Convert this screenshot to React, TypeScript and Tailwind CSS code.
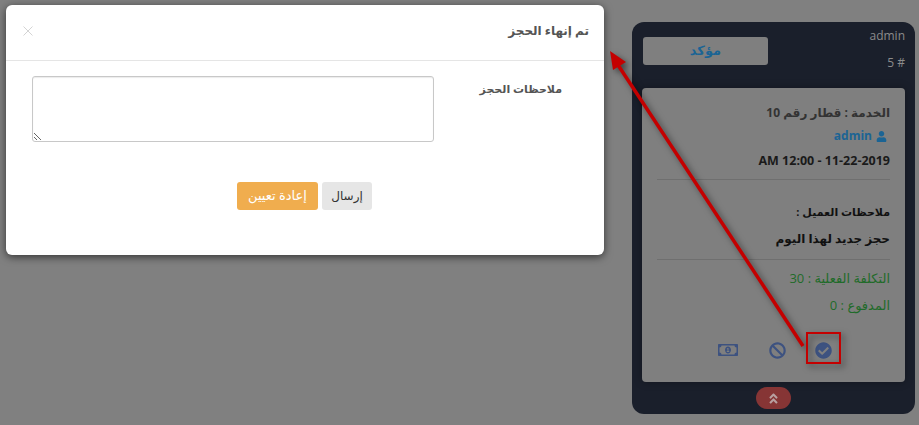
import { FaAngleDoubleUp, FaBan, FaCheckCircle, FaRegMoneyBillAlt, FaUser } from "react-icons/fa";

function BookingCard() {
  return (
    <div
      dir="rtl"
      className="flex h-[392px] w-[283px] flex-col rounded-[12px] bg-[#1a1f2b] px-[10px]"
    >
      <div className="flex h-[66px] shrink-0 justify-between">
        <div className="pt-[7px] text-[12px] leading-[14px] text-[#8b8b8b]">
          <p>admin</p>
          <p dir="ltr" className="mt-[13px] text-right">5 #</p>
        </div>
        <div className="ml-[1px] mt-[15px] flex h-[28px] w-[125px] items-center justify-center rounded-[3px] bg-[#7f7f7f] text-[13px] font-bold text-[#1b6494]">
          مؤكد
        </div>
      </div>
      <div className="flex h-[294px] flex-col rounded-[4px] bg-[#7f7f7f] px-[15px] shadow-[0_0_8px_rgba(0,0,0,0.3)]">
        <p className="mt-[16px] h-[18px] text-[12px] font-bold leading-[18px] text-[#333]">
          الخدمة : قطار رقم 10
        </p>
        <p className="mt-[5px] flex h-[18px] items-center gap-[4px] pr-[3px] text-[12px] font-bold leading-[18px] text-[#1b6494]">
          <FaUser className="size-[11px]" />
          admin
        </p>
        <p dir="ltr" className="mt-[7px] h-[18px] text-right text-[12.5px] font-bold leading-[18px] text-[#1a1a1a]">
          AM 12:00 - 11-22-2019
        </p>
        <div className="mt-[9px] border-t border-[#6f6f6f]" />
        <p className="mt-[23px] h-[18px] text-[11px] font-bold leading-[18px] text-[#111]">
          ملاحظات العميل :
        </p>
        <p className="mt-[9px] h-[18px] text-[12px] font-bold leading-[18px] text-[#111]">
          حجز جديد لهذا اليوم
        </p>
        <div className="mt-[11px] border-t border-[#6f6f6f]" />
        <p className="mt-[9px] h-[18px] text-[13px] leading-[18px] text-[#1f6b2a]">
          التكلفة الفعلية : 30
        </p>
        <p className="mt-[9px] h-[18px] text-[13px] leading-[18px] text-[#1f6b2a]">
          المدفوع : 0
        </p>
        <div className="mt-[26px] flex items-center pr-[58px] text-[#3d5280]">
          <FaCheckCircle className="size-[17px]" />
          <FaBan className="mr-[29px] size-[17px]" />
          <FaRegMoneyBillAlt className="mr-[31px] size-[20px]" />
        </div>
      </div>
      <div className="flex flex-1 items-start justify-center pt-[5px]">
        <div className="flex h-[22px] w-[35px] items-center justify-center rounded-full bg-[#863535] text-[#b8a0a0]">
          <FaAngleDoubleUp className="size-[13px]" />
        </div>
      </div>
    </div>
  );
}

function FinishModal() {
  return (
    <div
      dir="rtl"
      className="absolute left-[6px] top-[5px] h-[250px] w-[598px] rounded-[6px] bg-white shadow-[0_2px_8px_rgba(0,0,0,0.6)]"
    >
      <div className="flex h-[56px] items-center justify-between border-b border-[#e5e5e5] pb-[4px] pl-[17px] pr-[15px]">
        <h4 className="text-[12px] font-bold text-[#555]">تم إنهاء الحجز</h4>
        <svg viewBox="0 0 10 10" className="size-[10px] stroke-[#d4d4d4]" fill="none">
          <path d="M0.5 0.5 9.5 9.5M9.5 0.5 0.5 9.5" />
        </svg>
      </div>
      <div className="flex pt-[15px]">
        <label className="w-[170px] shrink-0 pr-[42px] pt-[5px] text-[11px] font-bold text-[#555]">
          ملاحظات الحجز
        </label>
        <textarea className="h-[66px] w-[402px] rounded-[3px] border border-[#c8c8c8] bg-white shadow-[inset_0_1px_1px_rgba(0,0,0,0.08)]" />
      </div>
      <div className="mr-[232px] mt-[40px] flex gap-[4px]">
        <button className="h-[28px] w-[50px] rounded-[3px] bg-[#e6e6e6] text-[12px] text-[#333]">إرسال</button>
        <button className="h-[28px] w-[81px] rounded-[3px] bg-[#f0ad4e] text-[13px] text-white">إعادة تعيين</button>
      </div>
    </div>
  );
}

function Annotation() {
  return (
    <svg
      viewBox="0 0 919 425"
      className="pointer-events-none absolute left-0 top-0 h-[425px] w-[919px] drop-shadow-[3px_3px_3px_rgba(0,0,0,0.5)]"
      fill="none"
    >
      <path d="M803 346 618 65" stroke="#c40000" strokeWidth="3.5" />
      <path d="M610 51 626 62 613 70Z" fill="#c40000" />
      <rect x="807" y="333" width="33" height="30" stroke="#c40000" strokeWidth="2" />
    </svg>
  );
}

export default function App() {
  return (
    <div
      className="relative flex h-[425px] w-[919px] justify-end overflow-hidden bg-[#808080] pr-[4px] pt-[22px]"
      style={{ fontFamily: '"Open Sans", "DejaVu Sans", sans-serif' }}
    >
      <BookingCard />
      <FinishModal />
      <Annotation />
    </div>
  );
}
